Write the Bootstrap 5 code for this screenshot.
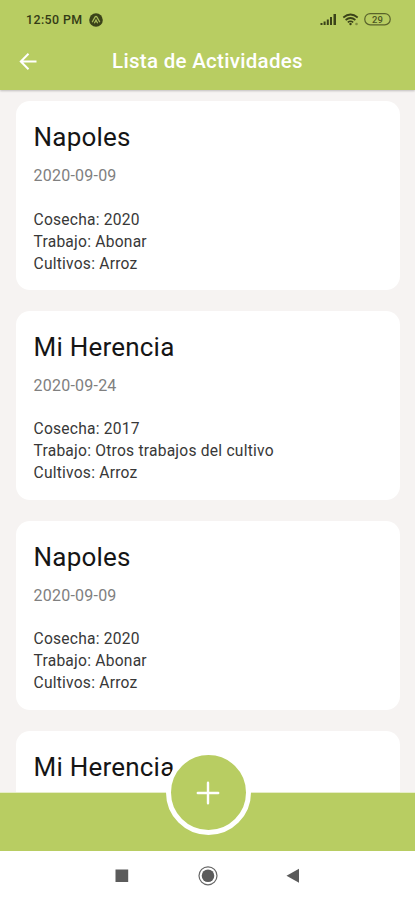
<!DOCTYPE html>
<html lang="es">
<head>
<meta charset="utf-8">
<meta name="viewport" content="width=device-width, initial-scale=1">
<title>Lista de Actividades</title>
<link href="https://cdn.jsdelivr.net/npm/bootstrap@5.3.0/dist/css/bootstrap.min.css" rel="stylesheet">
<style>
  body { font-family: Roboto, "Liberation Sans", sans-serif; background: #f6f3f2; }
  .brand-bg { background: #b8cd62; }
  .app-top { height: 90px; box-shadow: 0 1px 2px rgba(0,0,0,.22); z-index: 2; }
  .status-row { height: 39px; padding: 1px 24px 0 26px; font-size: 12.4px; letter-spacing: .4px; color: #343b16; }
  .status-row .notice { margin-left: 7px; }
  .title-row { height: 45px; }
  .title-row h1 { font-size: 20.5px; letter-spacing: .3px; }
  .back-btn { left: 19px; top: 13px; line-height: 0; }
  .feed { padding: 11.4px 15.5px 0 16px; gap: 21.4px; }
  .activity { height: 188.5px; border-radius: 14px; padding: 17.5px 17.5px; color: #383838; letter-spacing: .23px; }
  .activity h2 { font-size: 26px; line-height: 36px; letter-spacing: .22px; color: #151515; }
  .date { font-size: 16px; line-height: 20px; margin-top: 11.5px; color: #808080; }
  .details { font-size: 15.6px; line-height: 22px; margin-top: 22.2px; }
  .app-bottom { height: 58.5px; border-top: 1px solid #e6edc8; z-index: 2; }
  .add-btn { width: 85px; height: 85px; border: 5.5px solid #fff; left: 165.5px; top: -43px; }
  .sys-nav { height: 49.5px; padding-top: 1px; }
</style>
</head>
<body class="vh-100 overflow-hidden d-flex flex-column">
<header class="app-top brand-bg position-relative flex-shrink-0">
  <div class="status-row d-flex align-items-center justify-content-between fw-medium">
    <div class="d-flex align-items-center">
      <span>12:50 PM</span>
      <svg class="notice" width="14" height="14" viewBox="0 0 14 14"><circle cx="7" cy="7" r="6.8" fill="#3b4319"/><path d="M3.4 8.8 6 4.2q1-1.6 2 0l2.6 4.6M5.6 9.8 7 7.2l1.4 2.6" fill="none" stroke="#a8bb5b" stroke-width="1.3" stroke-linecap="round"/></svg>
    </div>
    <svg width="72" height="16" viewBox="319 12 72 16">
      <g fill="#3b4319"><path d="M320.5 23h2v2h-2zM323.6 21.5h2V25h-2zM326.8 19.5h2V25h-2zM330 17h2v8h-2zM333.5 14h2.5v11h-2.5z"/></g>
      <g fill="none" stroke="#3b4319" stroke-width="1.7"><path d="M343.3 17.5q7.2-6 14.4 0M345.6 20q4.9-4 9.8 0M347.8 22.3q2.7-2.1 5.4 0"/></g>
      <circle cx="350.5" cy="24" r="1.2" fill="#3b4319"/><circle cx="356.5" cy="24" r="1.3" fill="#7f8d40"/>
      <rect x="364.8" y="13.6" width="25.4" height="11.2" rx="5.4" fill="none" stroke="#59632b" stroke-width="1.2"/>
      <text x="377.5" y="22.8" text-anchor="middle" font-size="9.5" font-family="Roboto, sans-serif" letter-spacing="0" fill="#4d5624">29</text>
    </svg>
  </div>
  <div class="title-row position-relative d-flex align-items-center justify-content-center">
    <a href="#" class="back-btn position-absolute" aria-label="Volver"><svg width="20" height="20" viewBox="0 0 20 20" fill="none" stroke="#fff" stroke-width="2"><path d="M17.5 9.5H2.5M9.5 1.8 1.8 9.5l7.7 7.7"/></svg></a>
    <h1 class="m-0 text-white fw-medium">Lista de Actividades</h1>
  </div>
</header>
<main class="feed flex-grow-1 overflow-hidden d-flex flex-column">
  <article class="activity bg-white flex-shrink-0">
    <h2 class="m-0 fw-normal">Napoles</h2>
    <div class="date">2020-09-09</div>
    <div class="details"><div>Cosecha: 2020</div><div>Trabajo: Abonar</div><div>Cultivos: Arroz</div></div>
  </article>
  <article class="activity bg-white flex-shrink-0">
    <h2 class="m-0 fw-normal">Mi Herencia</h2>
    <div class="date">2020-09-24</div>
    <div class="details"><div>Cosecha: 2017</div><div>Trabajo: Otros trabajos del cultivo</div><div>Cultivos: Arroz</div></div>
  </article>
  <article class="activity bg-white flex-shrink-0">
    <h2 class="m-0 fw-normal">Napoles</h2>
    <div class="date">2020-09-09</div>
    <div class="details"><div>Cosecha: 2020</div><div>Trabajo: Abonar</div><div>Cultivos: Arroz</div></div>
  </article>
  <article class="activity bg-white flex-shrink-0">
    <h2 class="m-0 fw-normal">Mi Herencia</h2>
  </article>
</main>
<nav class="app-bottom brand-bg position-relative flex-shrink-0">
  <button type="button" class="add-btn brand-bg rounded-circle position-absolute p-0 d-flex align-items-center justify-content-center" aria-label="Agregar">
    <svg width="24" height="24" viewBox="0 0 24 24" stroke="#fff" stroke-width="2.4" stroke-linecap="round"><path d="M12 1.8v20.4M1.8 12h20.4"/></svg>
  </button>
</nav>
<footer class="sys-nav bg-white flex-shrink-0 d-flex justify-content-center align-items-center">
  <svg width="190" height="20" viewBox="113 866 190 20" fill="#5b5b5b">
    <rect x="115.5" y="869.5" width="12.7" height="12.5"/>
    <circle cx="208" cy="875.8" r="9" fill="none" stroke="#666" stroke-width="1.2"/><circle cx="208" cy="875.8" r="6.3"/>
    <path d="M286.5 875.8 299 868.8v14z"/>
  </svg>
</footer>
<script src="https://cdn.jsdelivr.net/npm/bootstrap@5.3.0/dist/js/bootstrap.bundle.min.js"></script>
</body>
</html>
